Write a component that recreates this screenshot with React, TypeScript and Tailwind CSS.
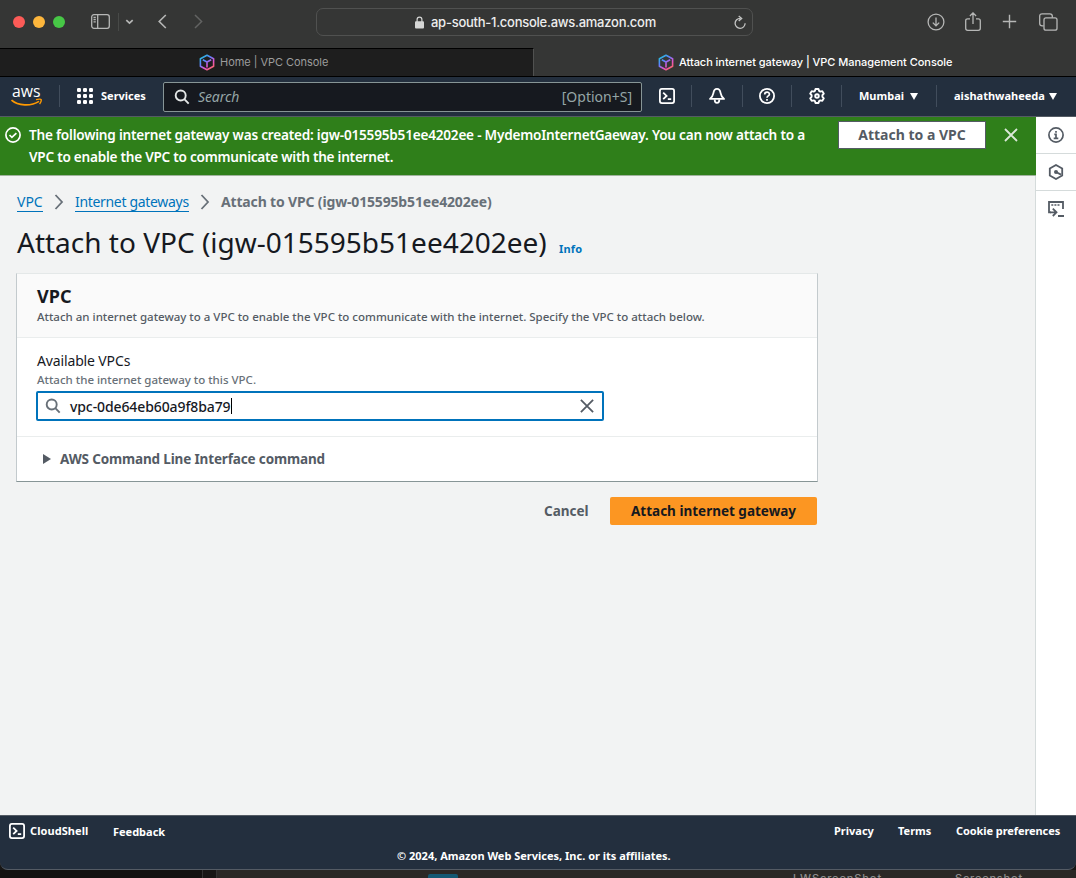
import React from "react";

const ember = "font-['Noto_Sans','Open_Sans',sans-serif]";

function Cube() {
  return (
    <svg width="16" height="18" viewBox="0 0 16 18" fill="none" strokeWidth="1.6" strokeLinejoin="round">
      <defs>
        <linearGradient id="cube" x1="2" y1="2" x2="13" y2="16" gradientUnits="userSpaceOnUse">
          <stop offset="0" stopColor="#22c3d6" />
          <stop offset="0.35" stopColor="#5a83ff" />
          <stop offset="0.65" stopColor="#e052d0" />
          <stop offset="1" stopColor="#ff6a55" />
        </linearGradient>
      </defs>
      <path d="M8 1.200 14.600 4.700v7.500L8 15.800 1.400 12.200V4.700ZM3.800 5.700 8 8l4.200-2.300M8 8v5.400" stroke="url(#cube)" />
    </svg>
  );
}

function ShellIcon() {
  return (
    <svg width="16" height="16" viewBox="0 0 16 16" fill="none" stroke="#fff" strokeWidth="1.8">
      <rect x="0.9" y="0.9" width="14.2" height="14.2" rx="2" />
      <path d="m4.2 4.6 3.4 3.3-3.4 3.3M8.8 11.2h3.4" />
    </svg>
  );
}

function Magnifier({ color }: { color: string }) {
  return (
    <svg width="16" height="16" viewBox="0 0 16 16" fill="none" stroke={color} strokeWidth="1.9">
      <circle cx="6.7" cy="6.5" r="5" />
      <path d="m10.3 10.2 4.4 4.4" />
    </svg>
  );
}

function Toolbar() {
  return (
    <div className="flex h-12 shrink-0 items-center bg-[#353635] pt-px text-[#b6b7b6]">
      <div className="ml-[13px] flex w-[52px] gap-2 pb-[6px]">
        <span className="size-3 rounded-full bg-[#fc5b57]" />
        <span className="size-3 rounded-full bg-[#fdb63c]" />
        <span className="size-3 rounded-full bg-[#47c746]" />
      </div>
      <div className="ml-[26px] flex items-center pb-[6px]">
        <svg width="19" height="15" viewBox="0 0 19 15" fill="none" stroke="currentColor" strokeWidth="1.3">
          <rect x="0.7" y="0.7" width="17.6" height="13.6" rx="2.2" />
          <path d="M6.7 1v13M2.5 3.5h2.3M2.5 5.7h2.3M2.5 7.9h2.3" />
        </svg>
        <span className="ml-2 h-[18px] w-px bg-[#484a48]" />
        <svg className="ml-[6px]" width="9" height="6" viewBox="0 0 9 6" fill="none" stroke="currentColor" strokeWidth="1.7">
          <path d="m1.3 1.2 3.2 3 3.2-3" />
        </svg>
        <svg className="ml-6" width="9" height="15" viewBox="0 0 9 15" fill="none" stroke="currentColor" strokeWidth="1.6">
          <path d="M7.8 1 1.2 7.5 7.8 14" />
        </svg>
        <svg className="ml-[27px]" width="9" height="15" viewBox="0 0 9 15" fill="none" stroke="#626362" strokeWidth="1.5">
          <path d="m1 1 6.600 6.500L1 14" />
        </svg>
      </div>
      <div className="mb-[5px] ml-[113px] flex h-7 w-[437px] items-center rounded-[7px] border border-[#505150] pl-[98px] pr-[6px]">
        <svg className="mt-px" width="9" height="13" viewBox="0 0 9 13">
          <path d="M2.1 6V3.600a2.400 2.400 0 0 1 4.800 0V6" fill="none" stroke="#d5d6d5" strokeWidth="1.2" />
          <rect y="5.2" width="9" height="7.2" rx="1" fill="#d5d6d5" />
        </svg>
        <span className="ml-[7px] mt-[2px] whitespace-nowrap font-['Inter',sans-serif] text-[13px] font-medium tracking-[-0.26px] text-[#ededed]">
          ap-south-1.console.aws.amazon.com
        </span>
        <svg className="ml-auto" width="12" height="15" viewBox="0 0 12 15" fill="none" stroke="#c4c5c4" strokeWidth="1.3">
          <path d="M6.200 3.300a5 5 0 1 0 4.900 5M4.700.900l3 2.500-3 2.700" />
        </svg>
      </div>
      <div className="mb-[6px] ml-[174px] flex items-center">
        <svg width="18" height="18" viewBox="0 0 18 18" fill="none" stroke="currentColor" strokeWidth="1.3">
          <circle cx="9" cy="9" r="7.9" />
          <path d="M9 4.600v8M5.800 9.600 9 12.800l3.200-3.200" />
        </svg>
        <svg className="mb-px ml-[20px]" width="16" height="19" viewBox="0 0 16 19" fill="none" stroke="currentColor" strokeWidth="1.3">
          <path d="M5 6.800H2.700c-1.200 0-2 .7-2 1.900v7.600c0 1.200.8 2 2 2h10.600c1.200 0 2-.8 2-2V8.700c0-1.200-.8-1.900-2-1.900H11M8 12V1M4.900 4 8 .9 11.100 4" />
        </svg>
        <svg className="ml-[21px]" width="15" height="15" viewBox="0 0 15 15" fill="none" stroke="currentColor" strokeWidth="1.4">
          <path d="M7.500.8v13.400M.8 7.500h13.400" />
        </svg>
        <svg className="ml-[22px]" width="19" height="18" viewBox="0 0 19 18" fill="none" stroke="currentColor" strokeWidth="1.3">
          <rect x="5" y="4.800" width="13" height="12.400" rx="2" />
          <path d="M4.700 12.800H3.200c-1.600 0-2.500-.8-2.500-2.300V3.100C.7 1.600 1.600.8 3.200.8h7.700c1.500 0 2.400.8 2.400 2.300v1.600" />
        </svg>
      </div>
    </div>
  );
}

function Tabs() {
  return (
    <div className="flex h-[29px] shrink-0 border-b border-black bg-[#353635] font-['Inter',sans-serif] text-[11px]">
      <div className="flex w-[534px] items-center border-r border-t border-r-[#505150] border-t-black bg-[#1e1e1e] pl-[199px] text-[#9c9c9c]">
        <Cube />
        <span className="ml-[5px] whitespace-nowrap tracking-[-0.04px]">Home | VPC Console</span>
      </div>
      <div className="flex items-center pl-[124px] pt-px text-white">
        <Cube />
        <span className="ml-[5px] whitespace-nowrap font-medium tracking-[-0.045px]">Attach internet gateway | VPC Management Console</span>
      </div>
    </div>
  );
}

function Sep({ className }: { className: string }) {
  return <span className={`h-[22px] w-px shrink-0 bg-[#414d5c] ${className}`} />;
}

function Caret() {
  return (
    <svg width="8" height="7" viewBox="0 0 8 7" fill="#fff">
      <path d="M0 0h8L4 7Z" />
    </svg>
  );
}

const dots = [0, 6, 12];

function Nav() {
  return (
    <header className={`flex h-10 shrink-0 items-center border-b border-[#545b64] bg-[#232f3e] pb-px text-white ${ember}`}>
      <svg className="ml-[11px] shrink-0 overflow-visible" width="31" height="21" viewBox="0 0 31 21">
        <text x="1" y="11" fill="#fff" fontFamily="Open Sans" fontSize="15.500" fontWeight="500" textLength="28.500" lengthAdjust="spacingAndGlyphs">
          aws
        </text>
        <path d="M.5 14.200C7 20 20 20.600 28 15.400" fill="none" stroke="#f90" strokeWidth="1.700" />
        <path d="M25 13.600c3.500-.9 5.500-.5 5.300.5 0 1.200-.7 2.900-1.700 4" fill="none" stroke="#f90" strokeWidth="1.400" />
      </svg>
      <Sep className="ml-[17px]" />
      <svg className="ml-[17px]" width="16" height="16" viewBox="0 0 16 16" fill="#fff">
        {dots.map((y) => dots.map((x) => <rect key={`${x}-${y}`} x={x} y={y} width="4" height="4" rx="1.3" />))}
      </svg>
      <span className="ml-2 w-[62px] whitespace-nowrap text-[11px] font-bold">Services</span>
      <div className="mt-px flex h-[30px] w-[479px] items-center rounded-[2px] border border-[#879596] bg-[#16191f] pl-[10px] pr-[9px] text-[14px] text-[#95a5a6]">
        <Magnifier color="#e4e7e7" />
        <span className="ml-2 italic tracking-[-0.1px]">Search</span>
        <span className="ml-auto">[Option+S]</span>
      </div>
      <span className="ml-[17px]"><ShellIcon /></span>
      <Sep className="ml-[16px]" />
      <svg className="ml-[16px]" width="18" height="18" viewBox="0 0 18 18" fill="none" stroke="#fff" strokeWidth="1.800" strokeLinejoin="round">
        <path d="M9 1.900c-2.300 0-3.200 1.600-3.600 4.200C5 8.500 3.800 10.200 2 11.900h14c-1.800-1.700-3-3.400-3.400-5.800C12.200 3.500 11.300 1.900 9 1.900Z" />
        <path d="M6.700 12.500c0 4.600 4.600 4.600 4.600 0" />
      </svg>
      <Sep className="ml-[16px]" />
      <svg className="ml-[16px]" width="16" height="16" viewBox="0 0 16 16" fill="none" stroke="#fff" strokeWidth="1.800">
        <circle cx="8" cy="8" r="7.100" />
        <path d="M5.700 6.500c0-3.100 4.700-3.100 4.700-.3C10.400 8 8 7.800 8 9.800M8 11v1.700" strokeWidth="1.700" />
      </svg>
      <Sep className="ml-[16px]" />
      <svg className="ml-[17px]" width="16" height="16" viewBox="0 0 16 16" fill="none" stroke="#fff" strokeWidth="1.900" strokeLinejoin="round">
        <path d="m6.500 1-.6 1.900-1.200.7-2-.5L1.200 5.700l1.400 1.500v1.600l-1.400 1.500 1.500 2.600 2-.5 1.200.7.6 1.900h3l.6-1.900 1.200-.7 2 .5 1.500-2.600-1.400-1.500V7.200l1.400-1.500-1.500-2.600-2 .5-1.200-.7L9.500 1Z" />
        <circle cx="8" cy="8" r="1.800" />
      </svg>
      <Sep className="ml-[16px]" />
      <span className="ml-[17px] w-[51px] whitespace-nowrap text-[11px] font-bold">Mumbai</span>
      <Caret />
      <Sep className="ml-[18px]" />
      <span className="ml-[17px] w-[95px] whitespace-nowrap text-[11px] font-bold">aishathwaheeda</span>
      <Caret />
    </header>
  );
}

function Banner() {
  return (
    <section className="flex h-[59px] w-[1036px] shrink-0 border-b border-[#a0b39d] bg-[#2f7f1a] text-white">
      <svg className="ml-[5px] mt-[10px] shrink-0" width="16" height="16" viewBox="0 0 16 16" fill="none" stroke="#fff" strokeWidth="1.700">
        <circle cx="8" cy="8" r="7.100" />
        <path d="m4.500 8 2.400 2.300 4.500-4.200" />
      </svg>
      <p className="ml-2 mt-[7px] w-[800px] shrink-0 whitespace-nowrap text-[13.6px] font-semibold leading-[22px] tracking-[-0.22px]">
        The following internet gateway was created: igw-015595b51ee4202ee - MydemoInternetGaeway. You can now attach to a
        <br />
        <span className="tracking-[-0.25px]">VPC to enable the VPC to communicate with the internet.</span>
      </p>
      <button className="ml-[9px] mt-[4px] h-[28px] w-[148px] shrink-0 border border-[#545b64] bg-white pb-[2px] text-[14px] font-bold text-[#545b64]">
        Attach to a VPC
      </button>
      <svg className="ml-[18px] mt-[11px]" width="14" height="14" viewBox="0 0 14 14" stroke="#dbe8d8" strokeWidth="1.800">
        <path d="m1 1 12 12M13 1 1 13" />
      </svg>
    </section>
  );
}

function Crumb() {
  return (
    <svg width="10" height="16" viewBox="0 0 10 16" fill="none" stroke="#687078" strokeWidth="1.800">
      <path d="m1.500 1 6.500 7-6.500 7" />
    </svg>
  );
}

function Content() {
  return (
    <main className="flex flex-1 flex-col pl-4">
      <nav className="mt-[16px] flex h-[20px] items-center whitespace-nowrap text-[14px] text-[#0073bb]">
        <a className="ml-px h-[20px] w-[26px] border-b border-[#0073bb] leading-[20px]">VPC</a>
        <span className="ml-[11px]"><Crumb /></span>
        <a className="ml-[11px] h-[20px] w-[114px] border-b border-[#0073bb] leading-[20px] tracking-[-0.32px]">Internet gateways</a>
        <span className="ml-[11px]"><Crumb /></span>
        <span className="mb-[2px] ml-[11px] font-bold tracking-[-0.16px] text-[#687078]">Attach to VPC (igw-015595b51ee4202ee)</span>
      </nav>
      <div className="mt-[12px] flex h-[36px] items-baseline whitespace-nowrap">
        <h1 className="ml-px w-[542px] text-[28px] leading-[36px] text-[#16191f]">Attach to VPC (igw-015595b51ee4202ee)</h1>
        <a className="text-[11px] font-bold tracking-[0.2px] text-[#0073bb]">Info</a>
      </div>
      <section className="mt-[13px] h-[209px] w-[802px] border border-b-[#879596] border-l-[#c3cacd] border-r-[#c3cacd] border-t-[#e4e8e8] bg-white">
        <div className="h-[64px] border-b border-[#eaeded] bg-[#fafafa] pl-5 pt-[11px]">
          <h2 className="h-[23px] text-[18px] font-bold leading-[22px] text-[#16191f]">VPC</h2>
          <p className="whitespace-nowrap text-[11.5px] font-medium leading-[18px] text-[#545b64]">
            Attach an internet gateway to a VPC to enable the VPC to communicate with the internet. Specify the VPC to attach below.
          </p>
        </div>
        <div className="h-[99px] border-b border-[#eaeded] pl-[19px] pt-[12px]">
          <p className="ml-px text-[14px] leading-[22px] tracking-[-0.14px] text-[#16191f]">Available VPCs</p>
          <p className="ml-px text-[11.5px] font-medium leading-[16px] text-[#687078]">Attach the internet gateway to this VPC.</p>
          <div className="mt-[3px] flex h-[30px] w-[568px] items-center rounded-[2px] border-2 border-[#0073bb] pl-[7px] pr-[8px]">
            <Magnifier color="#687078" />
            <span className="ml-[9px] text-[14px] font-medium tracking-[-0.1px] text-[#16191f]">vpc-0de64eb60a9f8ba79</span>
            <span className="h-4 w-[1.5px] bg-black" />
            <svg className="ml-auto" width="14" height="14" viewBox="0 0 14 14" stroke="#545b64" strokeWidth="1.800">
              <path d="m.9.900 12.200 12.200M13.100.9.900 13.100" />
            </svg>
          </div>
        </div>
        <div className="flex h-[44px] items-center pl-[26px] text-[13.5px] font-bold text-[#545b64]">
          <svg width="8" height="10" viewBox="0 0 8 10" fill="#545b64">
            <path d="M0 0v10l8-5Z" />
          </svg>
          <span className="ml-[9px] mt-px tracking-[-0.15px]">AWS Command Line Interface command</span>
        </div>
      </section>
      <div className="mt-[15px] flex items-center whitespace-nowrap text-[13.5px] font-bold">
        <button className="ml-[528px] mt-px w-[66px] text-left text-[#545b64]">Cancel</button>
        <button className="h-7 w-[207px] rounded-[2px] bg-[#fc9622] pt-px text-[#16191f]">Attach internet gateway</button>
      </div>
    </main>
  );
}

function SideTools() {
  return (
    <aside className="w-10 shrink-0 bg-white text-[#545b64]">
      <div className="flex h-[37px] items-center justify-center border-b border-[#d5dbdb]">
        <svg width="16" height="16" viewBox="0 0 16 16" fill="none" stroke="currentColor" strokeWidth="1.700">
          <circle cx="8" cy="8" r="7.100" />
          <path d="M8 4v1.800M6.300 7.400H8V11M5.700 11.400h4.600" />
        </svg>
      </div>
      <div className="flex h-[37px] items-center justify-center border-b border-[#d5dbdb]">
        <svg width="16" height="16" viewBox="0 0 16 16" fill="none" stroke="currentColor" strokeWidth="1.800">
          <path d="m8 1 6.200 3.500v7L8 15l-6.200-3.500v-7Z" />
          <circle cx="8" cy="8" r="2" fill="currentColor" stroke="none" />
          <path d="m8 8 5 2.600" />
        </svg>
      </div>
      <div className="flex h-[36px] items-center justify-center">
        <svg width="16" height="16" viewBox="0 0 16 16" fill="none" stroke="currentColor" strokeWidth="1.800">
          <path d="M3 11.300H1V1h14v7" />
          <path d="M3.300 4h2M6.400 4h2M9.500 4h2" strokeWidth="1.600" />
          <path d="M2 11.300h6M4.800 7.600l3.700 3.700-3.700 3.700M10 15h6" />
        </svg>
      </div>
    </aside>
  );
}

function Footer() {
  return (
    <footer className={`flex h-[55px] shrink-0 flex-col rounded-b-[8px] border-b border-t border-[#545b64] bg-[#232f3e] text-[11px] font-bold text-white ${ember}`}>
      <div className="flex h-[31px] items-center whitespace-nowrap pl-[9px]">
        <span className="mb-px"><ShellIcon /></span>
        <span className="ml-[5px] w-[83px] pb-px tracking-[0.08px]">CloudShell</span>
        <span className="mt-px w-[721px]">Feedback</span>
        <span className="w-[64px] pb-px">Privacy</span>
        <span className="w-[58px] pb-px">Terms</span>
        <span className="pb-px tracking-[-0.08px]">Cookie preferences</span>
      </div>
      <p className="ml-[397px] mt-[1px] whitespace-nowrap leading-4">© 2024, Amazon Web Services, Inc. or its affiliates.</p>
    </footer>
  );
}

function Desktop() {
  return (
    <div className="flex h-2 items-start overflow-hidden bg-[#2a2826] font-['Inter',sans-serif] text-[11px] font-medium text-[#8e8d8c]">
      <div className="h-2 w-[202px] bg-[#121110]" />
      <div className="h-2 w-[15px] border-x border-[#333] bg-[#171615]" />
      <div className="ml-[211px] mt-1 h-1 w-[30px] rounded-t-[2px] bg-[#135873]" />
      <span className="ml-[335px] mt-[2px] w-[162px] leading-[13px] tracking-[0.9px]">LWScreenShot</span>
      <span className="mt-[2px] leading-[13px] tracking-[0.8px]">Screenshot</span>
    </div>
  );
}

export default function App() {
  return (
    <div className="flex h-[878px] w-[1076px] flex-col overflow-hidden bg-[#171615]">
      <Toolbar />
      <Tabs />
      <Nav />
      <div className={`flex h-[698px] shrink-0 bg-[#f2f3f3] ${ember}`}>
        <div className="flex w-[1036px] flex-col border-r border-[#d5dbdb]">
          <Banner />
          <Content />
        </div>
        <SideTools />
      </div>
      <Footer />
      <Desktop />
    </div>
  );
}
